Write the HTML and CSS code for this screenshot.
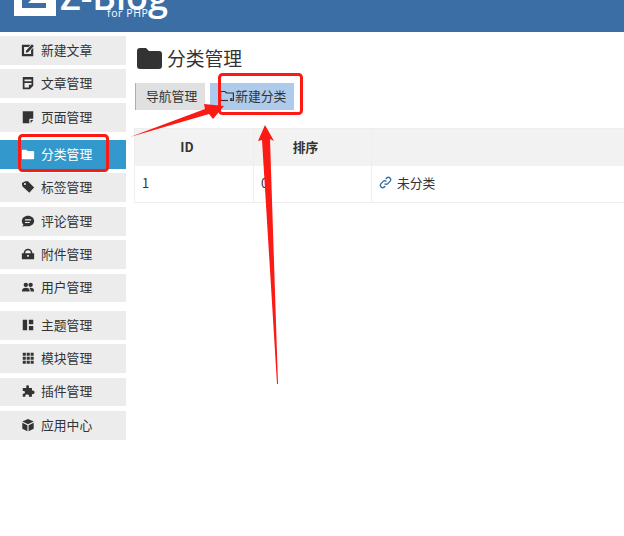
FILE: index.html
```html
<!DOCTYPE html>
<html lang="zh">
<head>
<meta charset="utf-8">
<title>分类管理</title>
<link rel="stylesheet" href="styles.css">
</head>
<body>
<header class="top">
  <svg class="logo-mark" width="42" height="16" viewBox="0 0 42 16"><path fill="#fff" d="M0 0H42V16H0Z"/><path fill="#3a6ea5" d="M8 8V0H17L14 3H32V8Z"/></svg>
  <div class="brand"><span class="brand-name">Z-Blog</span><span class="brand-sub">for PHP</span></div>
</header>
<div class="body">
  <nav class="side">
    <div class="group">
      <a class="item"><svg class="ic" viewBox="0 0 16 16"><path d="M1 2H11L8.500 4.500H3.500V12.500H11.500V8L14 5.500V15H1Z"/><path d="M6 8.500L12.500 1.500L14.700 3.500L8 10.500L5.500 11Z"/></svg>新建文章</a>
      <a class="item"><svg class="ic" viewBox="0 0 16 16"><path fill-rule="evenodd" d="M2 1H14V11L10 15H2ZM4 4V6H12V4ZM4 8V13H9V10H12V8Z"/></svg>文章管理</a>
      <a class="item"><svg class="ic" viewBox="0 0 16 16"><path d="M2 1.500H14V10H9.500V15H2Z"/><path d="M11 11.500H14L11 15Z"/></svg>页面管理</a>
    </div>
    <div class="group">
      <a class="item on"><svg class="ic" viewBox="0 0 16 16"><path d="M1 4.200Q1 3 2.200 3H6L7.500 4.500H13.800Q15 4.500 15 5.700V12.800Q15 14 13.800 14H2.200Q1 14 1 12.800Z"/></svg>分类管理</a>
      <a class="item"><svg class="ic" viewBox="0 0 16 16"><path fill-rule="evenodd" d="M1 3.500L5 1.500H8L15 8.500L9.500 14.500L1.500 7ZM4.500 3.400A1.200 1.200 0 1 0 4.600 5.800A1.200 1.200 0 1 0 4.500 3.400Z"/></svg>标签管理</a>
      <a class="item"><svg class="ic" viewBox="0 0 16 16"><path fill-rule="evenodd" d="M8 2C12 2 15 4.600 15 8S12 14 8 14H3L1.500 15L2.800 12.300C1.600 11.200 1 9.700 1 8C1 4.600 4 2 8 2ZM4.500 6V7.300H11.500V6ZM4.500 9V10.300H10V9Z"/></svg>评论管理</a>
      <a class="item"><svg class="ic" viewBox="0 0 16 16"><path fill-rule="evenodd" d="M3 7A5 5 0 0 1 13 7H15V14H1V7ZM4.800 7H11.200A3.200 3.200 0 0 0 4.800 7ZM7 9V11H9V9Z"/></svg>附件管理</a>
      <a class="item"><svg class="ic" viewBox="0 0 16 16"><circle cx="5.500" cy="5.500" r="2.500"/><circle cx="11" cy="5.500" r="2.500"/><path d="M1 13C1 10 3 8.800 5.500 8.800S10 10 10 13Z"/><path d="M11 13C11 11 10.500 10 9.500 9C10 8.800 10.500 8.800 11 8.800C13.500 8.800 15 10 15 13Z"/></svg>用户管理</a>
    </div>
    <div class="group">
      <a class="item"><svg class="ic" viewBox="0 0 16 16"><path d="M2 2H7V14H2ZM9 2H14V7H9ZM9 9H14V14H9Z"/></svg>主题管理</a>
      <a class="item"><svg class="ic" viewBox="0 0 16 16"><path d="M2 2H5.500V5.500H2ZM6.500 2H10V5.500H6.500ZM11 2H14.500V5.500H11ZM2 6.500H5.500V10H2ZM6.500 6.500H10V10H6.500ZM11 6.500H14.500V10H11ZM2 11H5.500V14.500H2ZM6.500 11H10V14.500H6.500ZM11 11H14.500V14.500H11Z"/></svg>模块管理</a>
      <a class="item"><svg class="ic" viewBox="0 0 16 16"><path d="M6 2.500C6 1.200 9 1.200 9 2.500V4.500H12.500V7.500C14.500 7 15.500 8 15.500 9.500S14.500 12 12.500 11.500V14.500H9C9.500 12.500 8.500 12 7 12S4.500 12.500 5 14.500H2V11C4 11.500 4.500 10.500 4.500 9.500S4 7.500 2 8V4.500H6Z"/></svg>插件管理</a>
      <a class="item"><svg class="ic" viewBox="0 0 16 16"><path d="M8 1L14.500 4L8 7L1.500 4Z"/><path d="M1.500 5.500L7.300 8.200V15L1.500 12.200ZM14.500 5.500V12.200L8.700 15V8.200Z"/></svg>应用中心</a>
    </div>
  </nav>
  <main class="main">
    <h1 class="title"><svg class="title-ic" viewBox="0 0 25 21"><path d="M0 3Q0 0 3 0H9L12 3H22Q25 3 25 6V18Q25 21 22 21H3Q0 21 0 18Z"/></svg>分类管理</h1>
    <div class="tabs">
      <a class="tab">导航管理</a>
      <a class="tab tab-on"><svg class="tab-ic" viewBox="0 0 14 12"><path d="M.6 10.500V1.500H5L6.500 3H13.400V10.500H10" fill="none" stroke="#333" stroke-width="1.200"/><path d="M.6 10.500H8" stroke="#333" stroke-width="1.200"/><path d="M10 9H12.500M11.200 8V11" stroke="#333"/></svg>新建分类</a>
    </div>
    <div class="table">
      <div class="row head"><div class="cell c1 center">ID</div><div class="cell c2 center">排序</div><div class="cell c3"></div></div>
      <div class="row body-row"><div class="cell c1">1</div><div class="cell c2">0</div><div class="cell c3"><svg class="link-ic" viewBox="0 0 14 14"><path d="M6 8.200A2.400 2.400 0 0 0 9.500 8.200L12 5.500A2.500 2.500 0 0 0 8.500 2L7.300 3.300M8 5.800A2.400 2.400 0 0 0 4.500 5.800L2 8.500A2.500 2.500 0 0 0 5.500 12L6.700 10.700" fill="none" stroke="#3a6ea5" stroke-width="1.500"/></svg>未分类</div></div>
    </div>
  </main>
</div>
<svg class="marks" width="624" height="536" viewBox="0 0 624 536">
  <rect x="19.500" y="135.500" width="88" height="35" rx="3" fill="none" stroke="#fb1a14" stroke-width="3"/>
  <rect x="219.500" y="74.500" width="82" height="39" rx="3" fill="none" stroke="#fb1a14" stroke-width="3"/>
  <path fill="#fb1a14" d="M130 137L205 109L204 104L224 106L213 119L209 114Z"/>
  <path fill="#fb1a14" d="M265 125L274 141L270 139L278 384H277L262 140L258 141Z"/>
</svg>
</body>
</html>
```
FILE: styles.css
```css
* { box-sizing: border-box; }
html, body { margin: 0; padding: 0; }
body {
  position: relative;
  width: 624px;
  height: 536px;
  overflow: hidden;
  background: #fff;
  color: #333;
  font: 12.800px/1.4 "Noto Sans CJK SC", "Liberation Sans", sans-serif;
}
.top {
  display: flex;
  align-items: flex-start;
  gap: 4px;
  height: 32px;
  padding-left: 14px;
  background: #3a6ea5;
  overflow: hidden;
}
.logo-mark { display: block; flex: none; }
.brand { position: relative; width: 112px; height: 32px; color: #fff; }
.brand-name {
  position: absolute;
  left: 0;
  bottom: 17px;
  font: 600 36px/36px "Open Sans", "Liberation Sans", sans-serif;
  white-space: nowrap;
}
.brand-sub {
  position: absolute;
  left: 47px;
  top: 7px;
  font: 10.500px/12px "Open Sans", "Liberation Sans", sans-serif;
  letter-spacing: .6px;
  white-space: nowrap;
}
.body { display: flex; align-items: flex-start; }
.side {
  flex: none;
  display: flex;
  flex-direction: column;
  gap: 8.400px;
  width: 126px;
  padding-top: 4px;
}
.group { display: flex; flex-direction: column; gap: 4.600px; }
.item {
  display: flex;
  align-items: center;
  gap: 6px;
  height: 28.800px;
  padding: 0 0 1px 21px;
  background: #ececec;
  color: #333;
}
.item.on { background: #3399cc; color: #fff; }
.ic { width: 14px; height: 14px; flex: none; fill: #333; }
.on .ic { fill: #fff; }
.main { flex: 1; min-width: 0; padding: 11px 0 0 8px; }
.title {
  display: flex;
  align-items: center;
  gap: 5px;
  margin: 0 0 0 3px;
  height: 31px;
  font-size: 18.800px;
  font-weight: 400;
  color: #333;
}
.title-ic { width: 25px; height: 21px; fill: #333; }
.tabs { display: flex; gap: 5px; margin: 9px 0 0 1px; }
.tab {
  display: flex;
  align-items: center;
  height: 27px;
  padding: 0 8px 1px 10px;
  background: #e0e0e0;
  border-left: 1px solid #f0a040;
}
.tab-on {
  gap: 1px;
  padding: 0 8px 1px 10px;
  background: #aecbeb;
  border-left: 0;
}
.tab-ic { width: 14px; height: 12px; flex: none; }
.table {
  margin-top: 18px;
  width: 520px;
  border-top: 1px solid #eee;
  border-left: 1px solid #eee;
}
.row { display: flex; height: 37px; border-bottom: 1px solid #eee; }
.row.head { height: 37px; background: #f2f2f2; border-bottom: 0; font-weight: 700; }
.cell {
  display: flex;
  align-items: center;
  padding: 0 0 1px 7px;
  border-right: 1px solid #eee;
}
.body-row .cell { padding-bottom: 3px; }
.center { justify-content: center; padding: 0 14px 1px 0; }
.c1 { width: 119px; }
.c2 { width: 118px; }
.c3 { flex: 1; gap: 5px; border-right: 0; }
.link-ic { width: 13px; height: 13px; flex: none; }
.marks { position: absolute; left: 0; top: 0; pointer-events: none; }
```
